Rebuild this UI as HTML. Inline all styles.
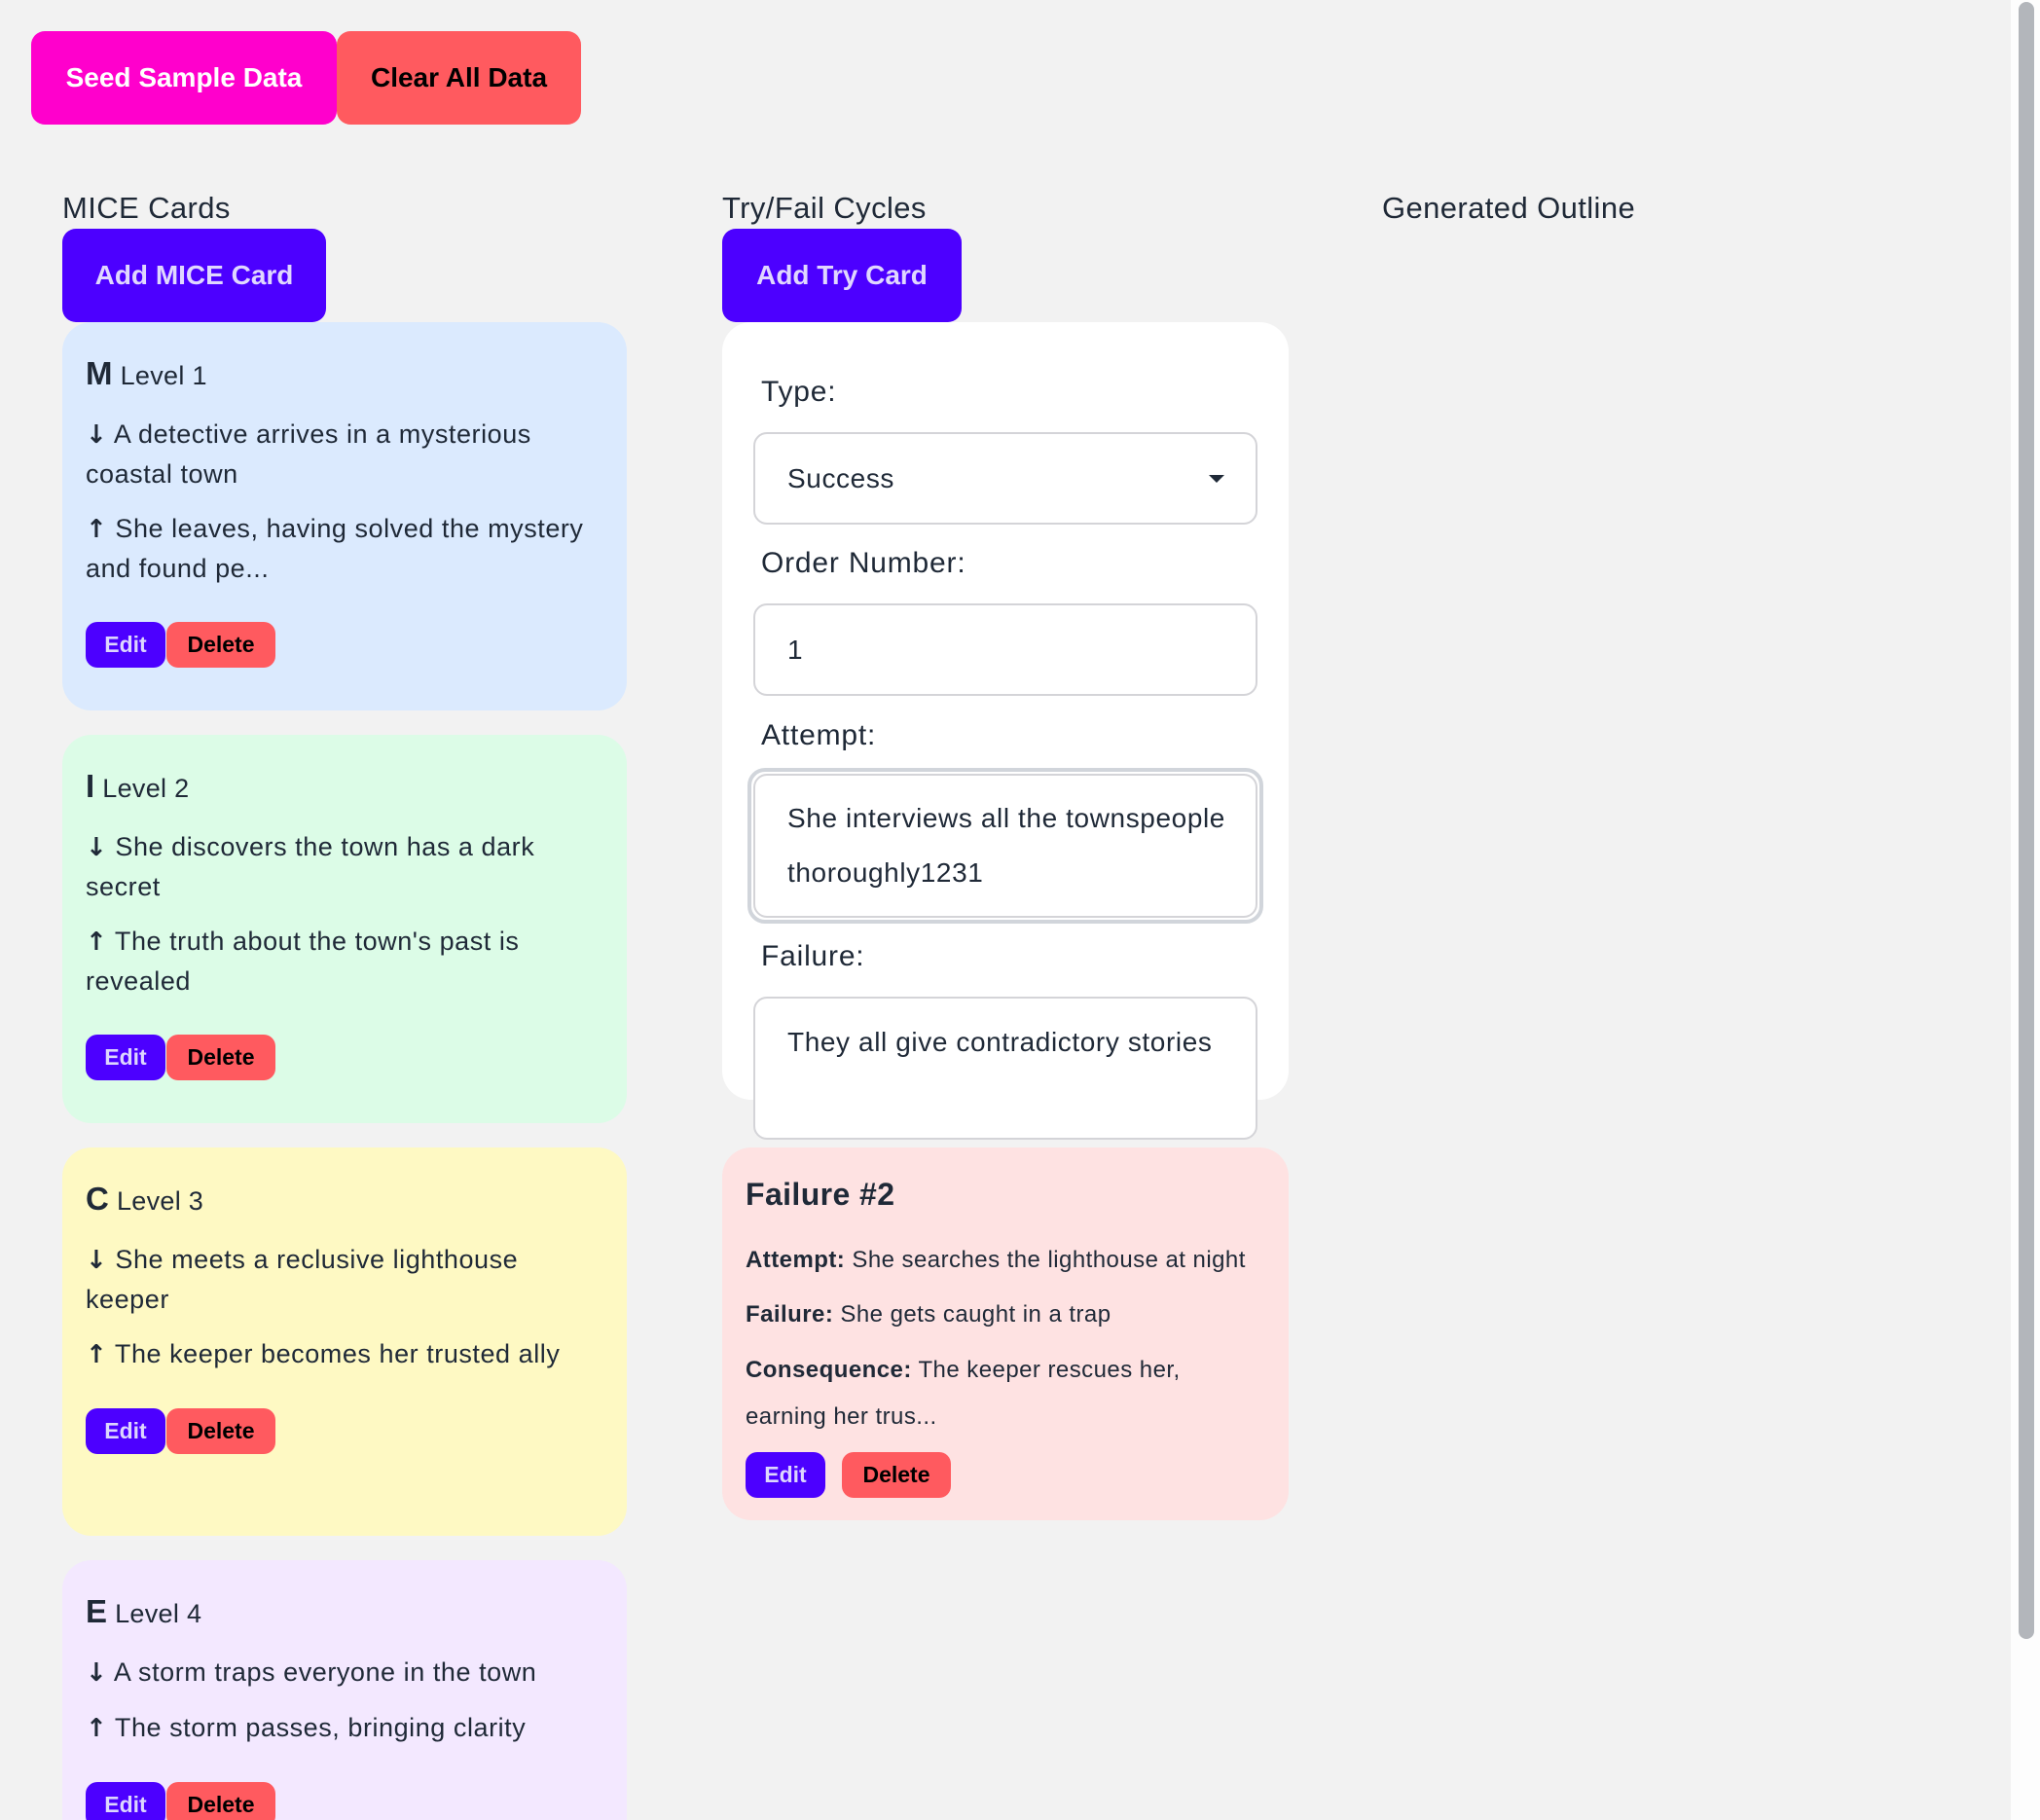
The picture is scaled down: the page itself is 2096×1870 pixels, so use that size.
<!DOCTYPE html>
<html style="overflow:hidden"><head><meta charset="utf-8"><style>
*{box-sizing:border-box;margin:0;padding:0}
html,body{width:2096px;height:1870px;overflow:hidden}
body{background:#f2f2f2;font-family:"Liberation Sans",Arial,sans-serif;color:#1f2937;position:relative}
#w{position:absolute;left:0;top:0;width:2096px;height:1870px;overflow:hidden}
.a{position:absolute}
.btn{position:absolute;border-radius:14px;font-weight:bold;display:flex;align-items:center;justify-content:center}
.h2{position:absolute;font-size:31px;letter-spacing:0.4px;color:#1f2937}
.card{position:absolute;left:64px;width:580px;height:399px;border-radius:30px;padding:28px 24px 0}
.card .t{font-size:27px;height:50px;line-height:50px;letter-spacing:0.3px}
.card .t b{font-size:33px}
.card p{font-size:27px;line-height:40px;letter-spacing:0.55px;margin-top:16px;width:522px}
.card p:first-of-type{margin-top:17px}
.ar{font-family:"DejaVu Sans",sans-serif;font-weight:bold;font-size:26px}
.row{display:flex;margin-top:35px}
.sb{height:47px;border-radius:12px;font-weight:bold;font-size:23px;display:flex;align-items:center;justify-content:center}
.e{background:#4c00ff;color:#ddd6fe;width:82px}
.d{background:#ff5a5f;color:#000;width:112px;margin-left:1px}
.lab{position:absolute;left:782px;font-size:30px;letter-spacing:0.8px}
.inp{position:absolute;left:774px;width:518px;background:#fff;border:2px solid #d4d4d8;border-radius:14px;font-size:28px;letter-spacing:0.6px;padding-left:33px}
.fc{position:absolute;left:24px;font-size:24px;letter-spacing:0.45px}
</style></head><body><div id="w">
<div class="btn" style="left:32px;top:32px;width:314px;height:96px;background:#ff00cc;color:#fff;font-size:28px">Seed Sample Data</div>
<div class="btn" style="left:346px;top:32px;width:251px;height:96px;background:#ff5a5f;color:#000;font-size:28px">Clear All Data</div>

<div class="h2" style="left:64px;top:196px">MICE Cards</div>
<div class="h2" style="left:742px;top:196px">Try/Fail Cycles</div>
<div class="h2" style="left:1420px;top:196px">Generated Outline</div>

<div class="btn" style="left:64px;top:235px;width:271px;height:96px;background:#4c00ff;color:#e0d7ff;font-size:28px">Add MICE Card</div>
<div class="btn" style="left:742px;top:235px;width:246px;height:96px;background:#4c00ff;color:#e0d7ff;font-size:28px">Add Try Card</div>

<div class="card" style="top:331px;background:#dbeafe">
<div class="t"><b>M</b> Level 1</div>
<p><span class="ar">↓</span> A detective arrives in a mysterious coastal town</p>
<p><span class="ar">↑</span> She leaves, having solved the mystery and found pe...</p>
<div class="row"><div class="sb e">Edit</div><div class="sb d">Delete</div></div>
</div>
<div class="card" style="top:755px;background:#dcfce7">
<div class="t"><b>I</b> Level 2</div>
<p><span class="ar">↓</span> She discovers the town has a dark secret</p>
<p><span class="ar">↑</span> The truth about the town's past is revealed</p>
<div class="row"><div class="sb e">Edit</div><div class="sb d">Delete</div></div>
</div>
<div class="card" style="top:1179px;background:#fef9c3">
<div class="t"><b>C</b> Level 3</div>
<p><span class="ar">↓</span> She meets a reclusive lighthouse keeper</p>
<p><span class="ar">↑</span> The keeper becomes her trusted ally</p>
<div class="row"><div class="sb e">Edit</div><div class="sb d">Delete</div></div>
</div>
<div class="card" style="top:1603px;height:300px;background:#f3e8ff">
<div class="t"><b>E</b> Level 4</div>
<p><span class="ar">↓</span> A storm traps everyone in the town</p>
<p><span class="ar">↑</span> The storm passes, bringing clarity</p>
<div class="row"><div class="sb e">Edit</div><div class="sb d">Delete</div></div>
</div>

<div class="a" style="left:742px;top:331px;width:582px;height:799px;background:#fff;border-radius:30px"></div>
<div class="lab" style="top:386px">Type:</div>
<div class="inp" style="top:444px;height:95px;line-height:91px">Success<span class="a" style="right:32px;top:42px;width:0;height:0;border-left:8px solid transparent;border-right:8px solid transparent;border-top:8px solid #1f2937"></span></div>
<div class="lab" style="top:562px">Order Number:</div>
<div class="inp" style="top:620px;height:95px;line-height:91px">1</div>
<div class="lab" style="top:739px">Attempt:</div>
<div class="a" style="left:768px;top:789px;width:530px;height:160px;border:4px solid #d1d5db;border-radius:18px"></div>
<div class="inp" style="top:795px;height:148px;line-height:56px;padding-top:16px">She interviews all the townspeople thoroughly1231</div>
<div class="lab" style="top:966px">Failure:</div>
<div class="inp" style="top:1024px;height:147px;line-height:40px;padding-top:25px">They all give contradictory stories</div>

<div class="a" style="left:742px;top:1179px;width:582px;height:383px;background:#fee2e2;border-radius:30px">
<div class="a" style="left:24px;top:30px;font-size:32px;font-weight:bold;letter-spacing:0.4px">Failure #2</div>
<div class="fc" style="top:101px;line-height:30px;width:550px"><b>Attempt:</b> She searches the lighthouse at night</div>
<div class="fc" style="top:157px;line-height:30px"><b>Failure:</b> She gets caught in a trap</div>
<div class="fc" style="top:205px;line-height:48px;width:480px"><b>Consequence:</b> The keeper rescues her, earning her trus...</div>
<div class="a sb e" style="left:24px;top:313px">Edit</div><div class="a sb d" style="left:122px;top:313px">Delete</div>
</div>

<div class="a" style="left:2066px;top:0;width:30px;height:1870px;background:#fdfdfd"></div>
<div class="a" style="left:2074px;top:2px;width:16px;height:1682px;background:#b3b6bb;border-radius:8px"></div>
</div></body></html>
